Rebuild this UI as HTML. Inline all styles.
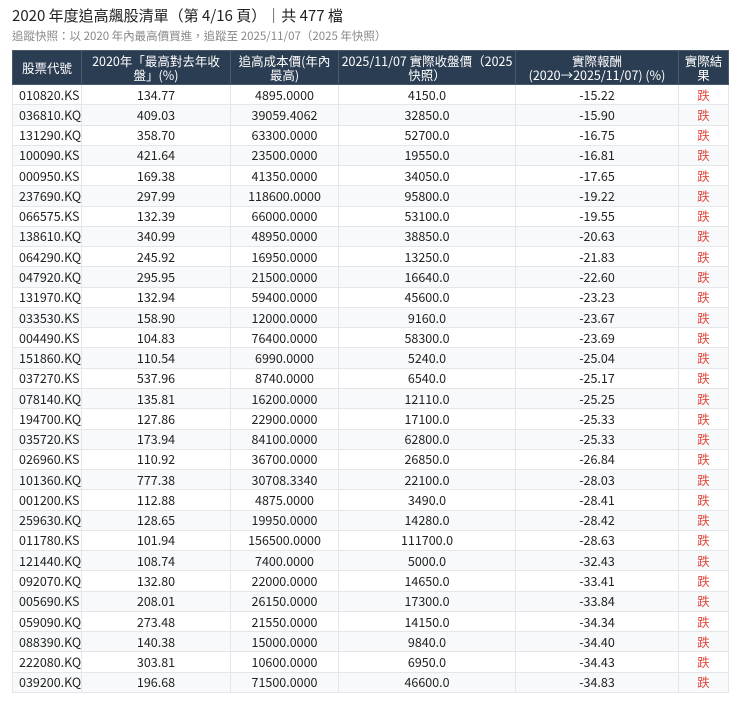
<!DOCTYPE html>
<html><head><meta charset="utf-8"><style>
body{margin:0;background:#fff;font-family:"Noto Sans CJK TC","Liberation Sans",sans-serif;color:#222;}
.t{position:absolute;left:12px;top:6px;font-size:15px;line-height:20px;color:#222;}
.s{position:absolute;left:12px;top:28px;font-size:11.5px;line-height:16px;color:#888;}
table{position:absolute;left:12px;top:50px;width:716px;border-collapse:collapse;table-layout:fixed;font-size:12.5px;}
th{background:#2b3d52;color:#fff;font-weight:normal;height:33px;line-height:14px;padding:0 5px;border:1px solid #4a5a6c;font-size:12.5px;}
th.n{padding:0 1px;}
td{height:20.27px;padding:0 6px;border:1px solid #e4e6e9;text-align:center;line-height:18px;white-space:nowrap;box-sizing:border-box;}
td:first-child{text-align:left;}
tr:nth-child(even) td{background:#f8f9fa;}
td.r{color:#e04a3f;}
</style></head><body>
<div class="t">2020 年度追高飆股清單（第 4/16 頁）｜共 477 檔</div>
<div class="s">追蹤快照：以 2020 年內最高價買進，追蹤至 2025/11/07（2025 年快照）</div>
<table>
<colgroup><col style="width:69px"><col style="width:149px"><col style="width:108px"><col style="width:177px"><col style="width:163px"><col style="width:50px"></colgroup>
<thead><tr><th>股票代號</th><th>2020年「最高對去年收盤」(%)</th><th>追高成本價(年內<br>最高)</th><th class="n">2025/11/07&nbsp;實際收盤價（2025快照）</th><th class="n">實際報酬<br>(2020→2025/11/07) (%)</th><th class="n">實際結果</th></tr></thead>
<tbody>
<tr><td>010820.KS</td><td>134.77</td><td>4895.0000</td><td>4150.0</td><td>-15.22</td><td class="r">跌</td></tr>
<tr><td>036810.KQ</td><td>409.03</td><td>39059.4062</td><td>32850.0</td><td>-15.90</td><td class="r">跌</td></tr>
<tr><td>131290.KQ</td><td>358.70</td><td>63300.0000</td><td>52700.0</td><td>-16.75</td><td class="r">跌</td></tr>
<tr><td>100090.KS</td><td>421.64</td><td>23500.0000</td><td>19550.0</td><td>-16.81</td><td class="r">跌</td></tr>
<tr><td>000950.KS</td><td>169.38</td><td>41350.0000</td><td>34050.0</td><td>-17.65</td><td class="r">跌</td></tr>
<tr><td>237690.KQ</td><td>297.99</td><td>118600.0000</td><td>95800.0</td><td>-19.22</td><td class="r">跌</td></tr>
<tr><td>066575.KS</td><td>132.39</td><td>66000.0000</td><td>53100.0</td><td>-19.55</td><td class="r">跌</td></tr>
<tr><td>138610.KQ</td><td>340.99</td><td>48950.0000</td><td>38850.0</td><td>-20.63</td><td class="r">跌</td></tr>
<tr><td>064290.KQ</td><td>245.92</td><td>16950.0000</td><td>13250.0</td><td>-21.83</td><td class="r">跌</td></tr>
<tr><td>047920.KQ</td><td>295.95</td><td>21500.0000</td><td>16640.0</td><td>-22.60</td><td class="r">跌</td></tr>
<tr><td>131970.KQ</td><td>132.94</td><td>59400.0000</td><td>45600.0</td><td>-23.23</td><td class="r">跌</td></tr>
<tr><td>033530.KS</td><td>158.90</td><td>12000.0000</td><td>9160.0</td><td>-23.67</td><td class="r">跌</td></tr>
<tr><td>004490.KS</td><td>104.83</td><td>76400.0000</td><td>58300.0</td><td>-23.69</td><td class="r">跌</td></tr>
<tr><td>151860.KQ</td><td>110.54</td><td>6990.0000</td><td>5240.0</td><td>-25.04</td><td class="r">跌</td></tr>
<tr><td>037270.KS</td><td>537.96</td><td>8740.0000</td><td>6540.0</td><td>-25.17</td><td class="r">跌</td></tr>
<tr><td>078140.KQ</td><td>135.81</td><td>16200.0000</td><td>12110.0</td><td>-25.25</td><td class="r">跌</td></tr>
<tr><td>194700.KQ</td><td>127.86</td><td>22900.0000</td><td>17100.0</td><td>-25.33</td><td class="r">跌</td></tr>
<tr><td>035720.KS</td><td>173.94</td><td>84100.0000</td><td>62800.0</td><td>-25.33</td><td class="r">跌</td></tr>
<tr><td>026960.KS</td><td>110.92</td><td>36700.0000</td><td>26850.0</td><td>-26.84</td><td class="r">跌</td></tr>
<tr><td>101360.KQ</td><td>777.38</td><td>30708.3340</td><td>22100.0</td><td>-28.03</td><td class="r">跌</td></tr>
<tr><td>001200.KS</td><td>112.88</td><td>4875.0000</td><td>3490.0</td><td>-28.41</td><td class="r">跌</td></tr>
<tr><td>259630.KQ</td><td>128.65</td><td>19950.0000</td><td>14280.0</td><td>-28.42</td><td class="r">跌</td></tr>
<tr><td>011780.KS</td><td>101.94</td><td>156500.0000</td><td>111700.0</td><td>-28.63</td><td class="r">跌</td></tr>
<tr><td>121440.KQ</td><td>108.74</td><td>7400.0000</td><td>5000.0</td><td>-32.43</td><td class="r">跌</td></tr>
<tr><td>092070.KQ</td><td>132.80</td><td>22000.0000</td><td>14650.0</td><td>-33.41</td><td class="r">跌</td></tr>
<tr><td>005690.KS</td><td>208.01</td><td>26150.0000</td><td>17300.0</td><td>-33.84</td><td class="r">跌</td></tr>
<tr><td>059090.KQ</td><td>273.48</td><td>21550.0000</td><td>14150.0</td><td>-34.34</td><td class="r">跌</td></tr>
<tr><td>088390.KQ</td><td>140.38</td><td>15000.0000</td><td>9840.0</td><td>-34.40</td><td class="r">跌</td></tr>
<tr><td>222080.KQ</td><td>303.81</td><td>10600.0000</td><td>6950.0</td><td>-34.43</td><td class="r">跌</td></tr>
<tr><td>039200.KQ</td><td>196.68</td><td>71500.0000</td><td>46600.0</td><td>-34.83</td><td class="r">跌</td></tr>
</tbody></table>
</body></html>
